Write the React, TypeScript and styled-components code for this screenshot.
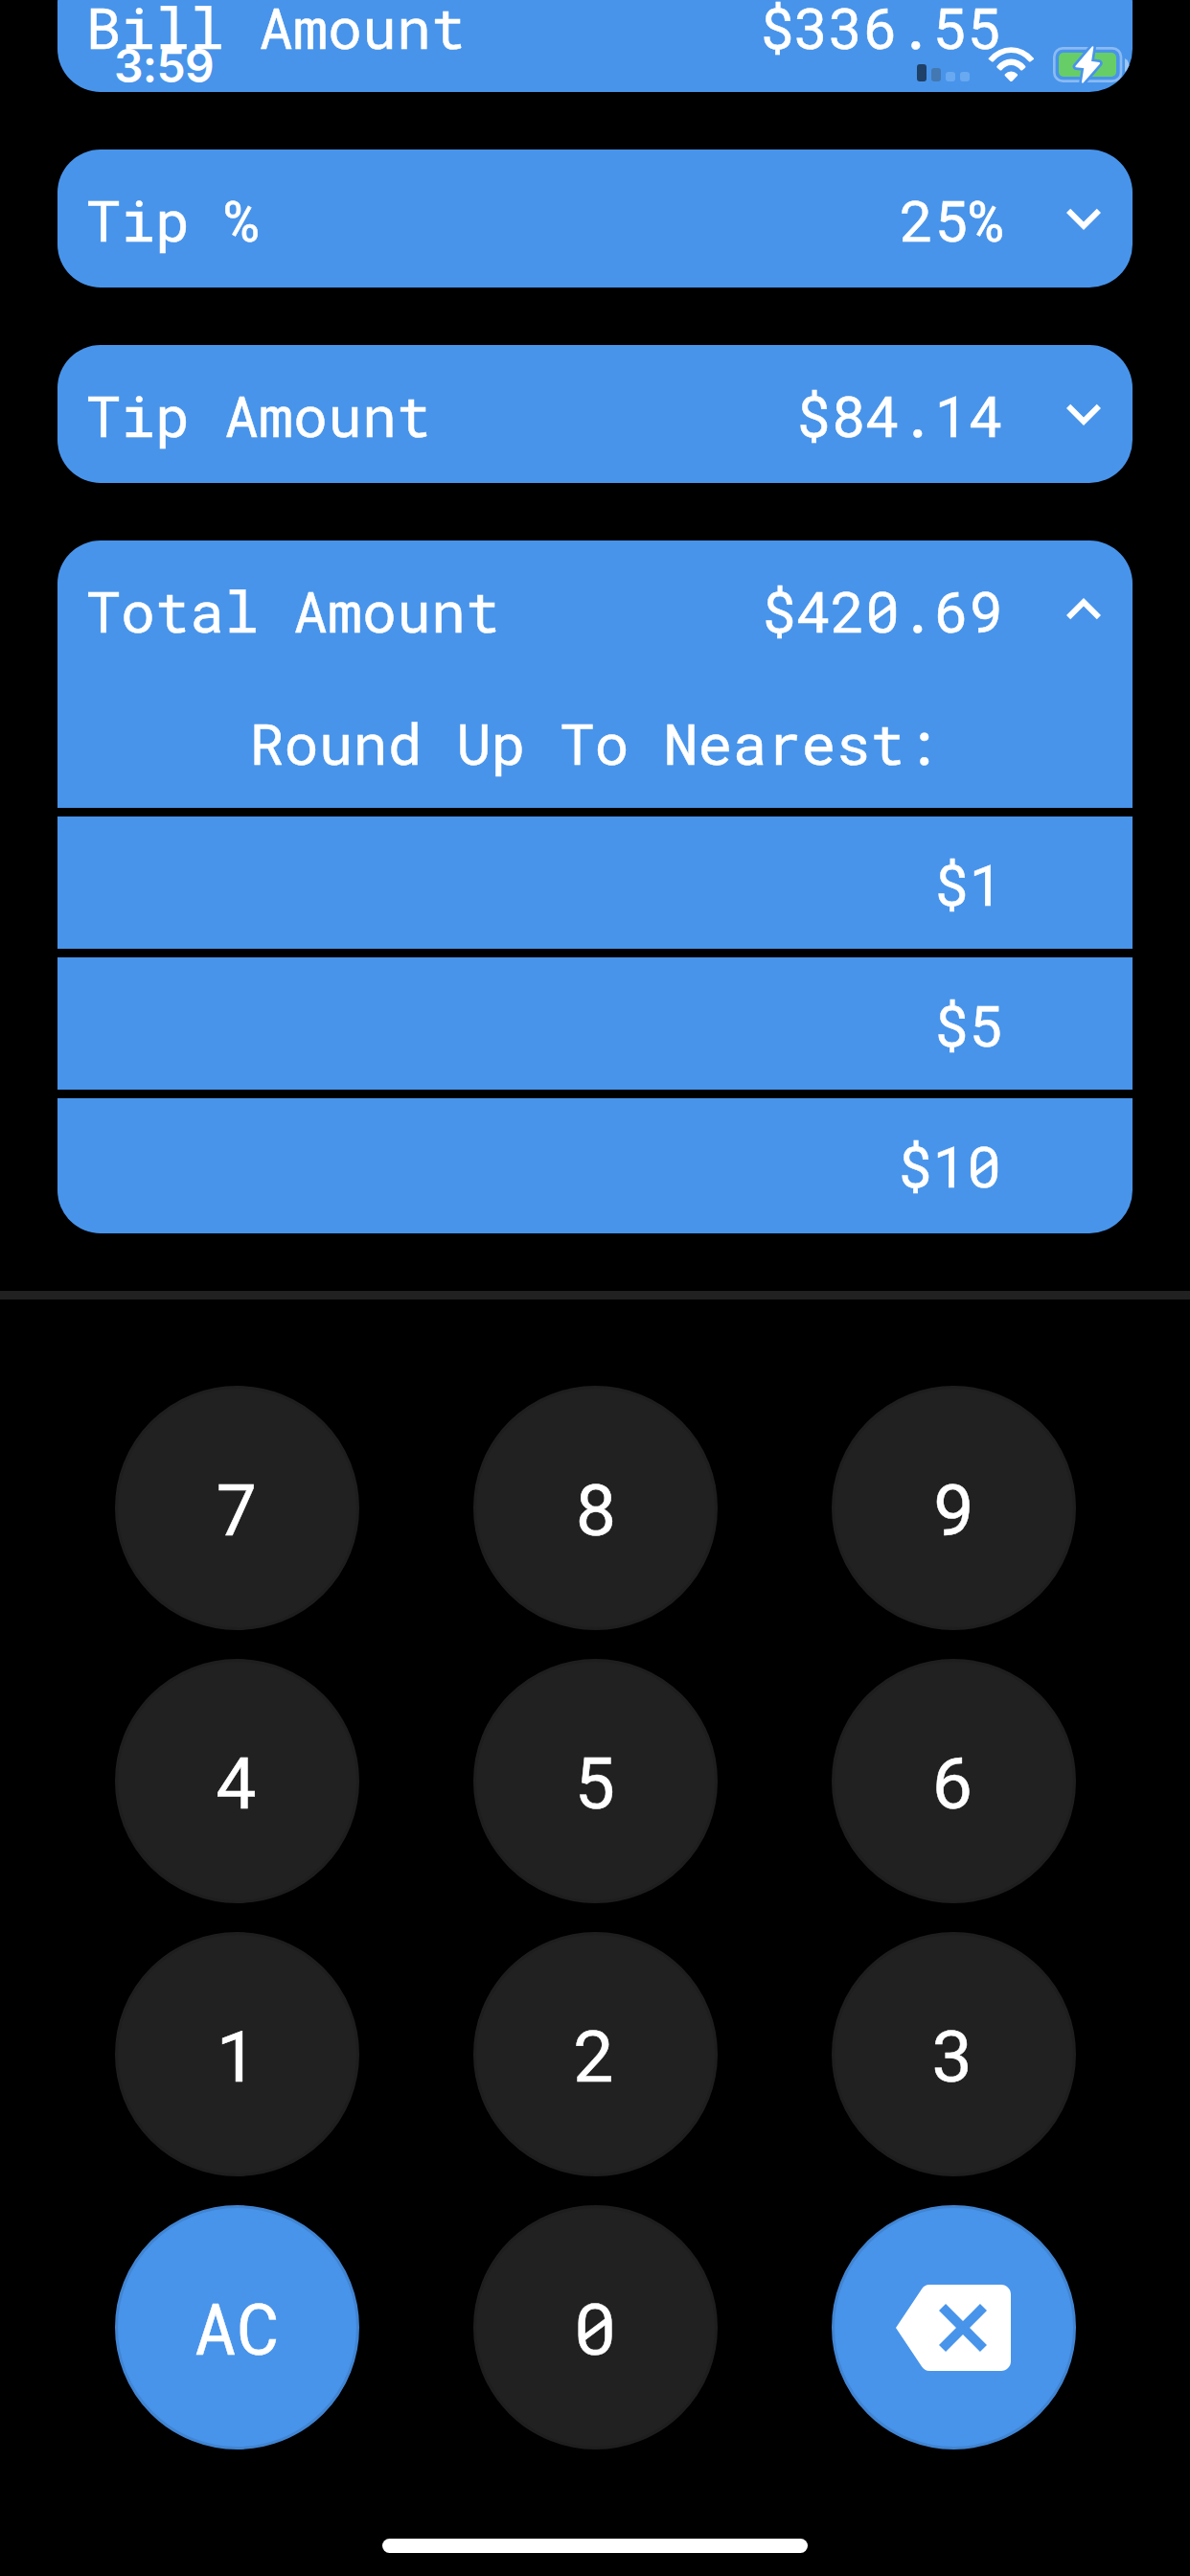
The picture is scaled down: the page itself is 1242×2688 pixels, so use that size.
import React from "react";
import styled, { createGlobalStyle } from "styled-components";

const BLUE = "#4894ea";
const DARK = "#212121";

const GlobalStyle = createGlobalStyle`
  * { box-sizing: border-box; }
  body { margin: 0; background: #000; }
`;

const Screen = styled.div`
  position: relative;
  display: flex;
  flex-direction: column;
  width: 1242px;
  height: 2688px;
  overflow: hidden;
  background: #000;
  color: #fff;
  font-family: "Roboto Mono", "Liberation Mono", monospace;
  font-size: 60px;
  -webkit-text-stroke: 0.5px #fff;
`;

const StatusBar = styled.div`
  position: absolute;
  top: 0;
  left: 0;
  z-index: 2;
  display: flex;
  align-items: flex-start;
  width: 100%;
  padding: 42px 50px 0 119px;
`;

const Time = styled.div`
  flex: 1;
  padding-top: 1px;
  font-family: Inter, "Liberation Sans", sans-serif;
  font-size: 48px;
  font-weight: 600;
  line-height: 52px;
  letter-spacing: -0.7px;
  -webkit-text-stroke: 0;
`;

const Signal = styled.div`
  display: flex;
  align-items: flex-end;
  gap: 5px;
  height: 43px;
  margin-right: 12px;
`;

const Bar = styled.span<{ $height: number; $color: string }>`
  width: 10px;
  height: ${(p) => p.$height}px;
  border-radius: 3px;
  background: ${(p) => p.$color};
`;

const WifiIcon = styled.svg`
  width: 62px;
  height: 50px;
  margin-right: 6px;
`;

const BatteryIcon = styled.svg`
  width: 100px;
  height: 56px;
`;

const Panels = styled.main`
  display: flex;
  flex-direction: column;
  gap: 60px;
  height: 1347px;
  padding: 0 60px;
`;

const Card = styled.section<{ $scrolled?: boolean }>`
  flex: none;
  overflow: hidden;
  margin-top: ${(p) => (p.$scrolled ? "-42px" : "0")};
  border-radius: 45px;
`;

const CardHeader = styled.div<{ $height?: number }>`
  display: flex;
  align-items: center;
  height: ${(p) => p.$height ?? 144}px;
  padding: 0 15px 0 30px;
  background: ${BLUE};
`;

const Label = styled.span`
  flex: 1;
  white-space: pre;
`;

const Value = styled.span<{ $inset?: number }>`
  margin-right: ${(p) => p.$inset ?? 48}px;
`;

const Chevron = styled.svg`
  width: 72px;
  height: 72px;
  fill: #fff;
`;

const Caption = styled.div`
  display: flex;
  align-items: center;
  justify-content: center;
  height: 135px;
  padding: 0 1px 3px 0;
  background: ${BLUE};
`;

const Option = styled.div<{ $inset: number; $last?: boolean }>`
  display: flex;
  align-items: center;
  justify-content: flex-end;
  height: ${(p) => (p.$last ? 141 : 138)}px;
  margin-top: 9px;
  padding: 1px ${(p) => p.$inset}px ${(p) => (p.$last ? 3 : 0)}px 0;
  background: ${BLUE};
`;

const Divider = styled.div`
  height: 9px;
  background: ${DARK};
`;

const Keypad = styled.div`
  display: grid;
  grid-template-columns: repeat(3, 1fr);
  justify-items: center;
  row-gap: 30px;
  padding: 90px 60px 0;
`;

const Key = styled.button<{ $accent?: boolean }>`
  display: flex;
  align-items: center;
  justify-content: center;
  width: 255px;
  height: 255px;
  padding: 0 0 2px;
  border: 3px solid ${(p) => (p.$accent ? "#4185d3" : "#1e1e1e")};
  border-radius: 50%;
  background: ${(p) => (p.$accent ? BLUE : DARK)};
  color: #fff;
  font: inherit;
  font-size: 75px;
`;

const BackspaceIcon = styled.svg`
  width: 120px;
  height: 120px;
  margin-top: 2px;
  fill: #fff;
`;

const HomeIndicator = styled.div`
  width: 444px;
  height: 15px;
  margin: 93px auto 0;
  border-radius: 8px;
  background: #fff;
`;

const DOWN = "M7.41 8.59 12 13.17l4.59-4.58L18 10l-6 6-6-6z";
const UP = "M12 8l-6 6 1.41 1.41L12 10.83l4.59 4.58L18 14z";
const BOLT = "M145 22 L94 82 L121 85 L114 131 L165 72 L138 68 Z";

const signalBars = [
  { height: 18, color: "#1f4067" },
  { height: 14, color: "#4478b2" },
  { height: 10, color: "#69a9f2" },
  { height: 10, color: "#69a9f2" },
];

const roundOptions = [
  { text: "$1", inset: 135 },
  { text: "$5", inset: 135 },
  { text: "$10", inset: 137 },
];

const digits = ["7", "8", "9", "4", "5", "6", "1", "2", "3"];

function Status() {
  return (
    <StatusBar>
      <Time>3:59</Time>
      <Signal>
        {signalBars.map((bar, i) => (
          <Bar key={i} $height={bar.height} $color={bar.color} />
        ))}
      </Signal>
      <WifiIcon viewBox="0 0 186 150" fill="#fff">
        <path d="M25 55A88 88 0 0 1 163 55Q167 57 164 60L155 67Q152 69 149 66A70 70 0 0 0 39 66Q36 69 33 67L24 60Q21 57 25 55Z" />
        <path d="M50 80A56 56 0 0 1 138 80Q141 83 138 86L130 93Q127 96 123 93A36 36 0 0 0 65 93Q61 96 58 93L50 86Q47 83 50 80Z" />
        <path d="M75 106A26 26 0 0 1 113 106Q116 109 113 112L97 128Q94 130 91 128L75 112Q72 109 75 106Z" />
      </WifiIcon>
      <BatteryIcon viewBox="0 0 300 168">
        <rect x="25" y="25" width="209" height="103" rx="27" fill="none" stroke="#8abbf2" strokeWidth="8" />
        <rect x="39" y="39" width="180" height="75" rx="15" fill="#67ce67" />
        <path d="M246 57Q259 64 259 80L250 97L246 99Z" fill="#9cc6f5" />
        <path d={BOLT} fill={BLUE} stroke={BLUE} strokeWidth="22" strokeLinejoin="round" />
        <path d={BOLT} fill="#fff" stroke="#fff" strokeWidth="6" strokeLinejoin="round" />
      </BatteryIcon>
    </StatusBar>
  );
}

function AmountRow(props: { label: string; value: string; open?: boolean }) {
  return (
    <CardHeader>
      <Label>{props.label}</Label>
      <Value>{props.value}</Value>
      <Chevron viewBox="0 0 24 24">
        <path d={props.open ? UP : DOWN} />
      </Chevron>
    </CardHeader>
  );
}

export default function App() {
  return (
    <Screen>
      <GlobalStyle />
      <Status />
      <Panels>
        <Card $scrolled>
          <CardHeader $height={138}>
            <Label>Bill Amount</Label>
            <Value $inset={122}>$336.55</Value>
          </CardHeader>
        </Card>
        <Card>
          <AmountRow label="Tip %" value="25%" />
        </Card>
        <Card>
          <AmountRow label="Tip Amount" value="$84.14" />
        </Card>
        <Card>
          <AmountRow label="Total Amount" value="$420.69" open />
          <Caption>Round Up To Nearest:</Caption>
          {roundOptions.map((option, i) => (
            <Option key={option.text} $inset={option.inset} $last={i === roundOptions.length - 1}>
              {option.text}
            </Option>
          ))}
        </Card>
      </Panels>
      <Divider />
      <Keypad>
        {digits.map((digit) => (
          <Key key={digit}>{digit}</Key>
        ))}
        <Key $accent>AC</Key>
        <Key>0</Key>
        <Key $accent aria-label="Backspace">
          <BackspaceIcon viewBox="0 0 24 24">
            <path d="M22 3H7c-.69 0-1.23.35-1.59.88L0 12l5.41 8.11c.36.53.9.89 1.59.89h15c1.1 0 2-.9 2-2V5c0-1.1-.9-2-2-2zm-3 12.59L17.59 17 14 13.41 10.41 17 9 15.59 12.59 12 9 8.41 10.41 7 14 10.59 17.59 7 19 8.41 15.41 12 19 15.59z" />
          </BackspaceIcon>
        </Key>
      </Keypad>
      <HomeIndicator />
    </Screen>
  );
}
